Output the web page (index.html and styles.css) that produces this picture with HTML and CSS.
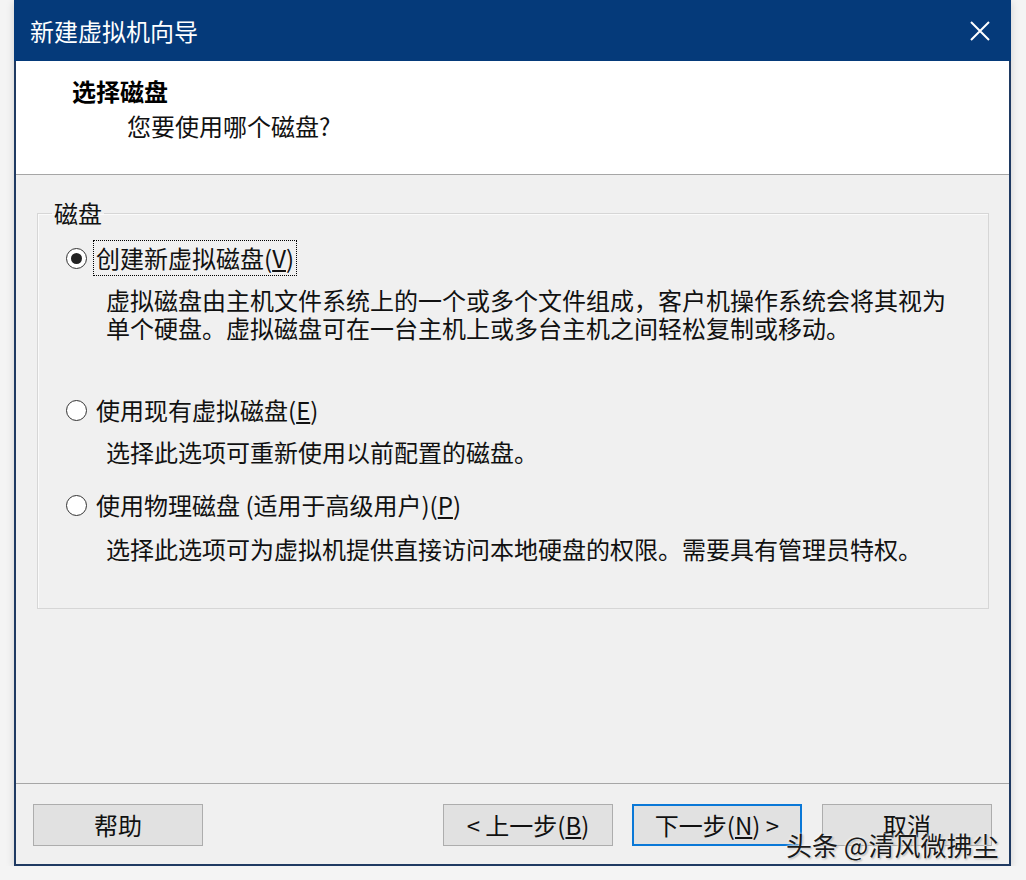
FILE: index.html
```html
<!DOCTYPE html>
<html lang="zh-CN">
<head>
    <meta charset="UTF-8">
    <title>新建虚拟机向导</title>
    <link rel="stylesheet" href="styles.css">
</head>
<body>
<div class="window">

    <div class="titlebar">
        <span class="title">新建虚拟机向导</span>
        <svg class="close" width="22" height="22" viewBox="0 0 22 22">
            <path d="M2 2 L20 20 M20 2 L2 20" stroke="#fff" stroke-width="2" fill="none"/>
        </svg>
    </div>

    <div class="header">
        <div class="header-title">选择磁盘</div>
        <div class="header-sub">您要使用哪个磁盘?</div>
    </div>

    <div class="content">
        <fieldset class="group">
            <legend>磁盘</legend>

            <div class="option option-first">
                <span class="radio checked"></span>
                <span class="label focus">创建新虚拟磁盘(<u>V</u>)</span>
            </div>
            <div class="desc">虚拟磁盘由主机文件系统上的一个或多个文件组成，客户机操作系统会将其视为<br>单个硬盘。虚拟磁盘可在一台主机上或多台主机之间轻松复制或移动。</div>

            <div class="option option-second">
                <span class="radio"></span>
                <span class="label">使用现有虚拟磁盘(<u>E</u>)</span>
            </div>
            <div class="desc">选择此选项可重新使用以前配置的磁盘。</div>

            <div class="option option-third">
                <span class="radio"></span>
                <span class="label">使用物理磁盘 (适用于高级用户)(<u>P</u>)</span>
            </div>
            <div class="desc desc-last">选择此选项可为虚拟机提供直接访问本地硬盘的权限。需要具有管理员特权。</div>
        </fieldset>
    </div>

    <div class="footer">
        <button class="btn">帮助</button>
        <div class="btn-group">
            <button class="btn">&lt; 上一步(<u>B</u>)</button>
            <button class="btn btn-default">下一步(<u>N</u>) &gt;</button>
            <button class="btn btn-cancel">取消</button>
        </div>
    </div>

</div>

<div class="watermark">头条 @清风微拂尘</div>

</body>
</html>
```

FILE: styles.css
```css
body {
    margin: 0;
    padding: 0;
    background-color: #f4f4f4;
    font-family: "Noto Sans CJK SC", "Liberation Sans", sans-serif;
    color: #111;
}

.window {
    position: relative;
    margin-left: 14px;
    width: 997px;
    height: 866px;
    box-sizing: border-box;
    border: 2px solid #1f3a62;
    border-top: none;
    background-color: #f0f0f0;
    display: flex;
    flex-direction: column;
    box-shadow: 0 2px 8px rgba(0, 0, 0, 0.15);
}

.titlebar {
    height: 61px;
    background-color: #053a7a;
    display: flex;
    align-items: center;
    justify-content: space-between;
    padding: 0 20px 0 16px;
    margin: 0 -2px;
}

.title {
    font-size: 24px;
    color: #ffffff;
    line-height: 30px;
}

.close {
    display: block;
}

.header {
    background-color: #ffffff;
    border-bottom: 1px solid #a6a6a6;
    padding-left: 56px;
    box-sizing: border-box;
    height: 114px;
}

.header-title {
    font-size: 24px;
    font-weight: bold;
    line-height: 30px;
    padding-top: 15px;
    color: #000;
}

.header-sub {
    font-size: 24px;
    line-height: 30px;
    margin-top: 5px;
    padding-left: 55px;
}

.content {
    flex: 1;
    padding: 25px 20px 0 21px;
    border-bottom: 1px solid #a6a6a6;
}

.group {
    margin: 0;
    padding: 0 0 45px 0;
    border: 1px solid #d6d6d6;
    box-shadow: inset 1px 1px 0 #fafafa;
}

.group legend {
    font-size: 24px;
    line-height: 26px;
    padding: 0 2px;
    margin-left: 14px;
}

.option {
    display: flex;
    align-items: center;
    height: 36px;
    padding-left: 28px;
    font-size: 24px;
}

.option-first {
    margin-top: 14px;
}

.option-second {
    margin-top: 50px;
}

.option-third {
    margin-top: 21px;
}

.radio {
    width: 19px;
    height: 19px;
    border: 1.5px solid #333;
    border-radius: 50%;
    background-color: #fff;
    position: relative;
    flex-shrink: 0;
}

.radio.checked::after {
    content: "";
    position: absolute;
    left: 4px;
    top: 4px;
    width: 11px;
    height: 11px;
    border-radius: 50%;
    background-color: #222;
}

.label {
    margin-left: 6px;
    padding: 0 2px;
    line-height: 34px;
    border: 1px solid transparent;
}

.label.focus {
    border: 1px dotted #000;
}

.desc {
    font-size: 24px;
    line-height: 28px;
    margin-top: 10px;
    padding-left: 68px;
}

.desc-last {
    margin-top: 12px;
}

.footer {
    height: 80px;
    display: flex;
    justify-content: space-between;
    align-items: flex-start;
    padding: 20px 17px 0 17px;
    box-sizing: border-box;
}

.btn-group {
    display: flex;
    gap: 19px;
}

.btn {
    width: 170px;
    height: 42px;
    font-family: "Noto Sans CJK SC", "Liberation Sans", sans-serif;
    font-size: 24px;
    color: #111;
    background-color: #e1e1e1;
    border: 1px solid #adadad;
    padding: 0;
    line-height: 38px;
}

.btn-default {
    border: 2px solid #0a78d7;
}

.btn-cancel {
    margin-left: 1px;
}

.watermark {
    position: absolute;
    left: 786px;
    top: 826px;
    font-size: 26px;
    color: #1a1a1a;
    text-shadow: 0 0 2px #fff, 0 0 3px #fff, 1px 1px 2px rgba(0, 0, 0, 0.4);
}
```
